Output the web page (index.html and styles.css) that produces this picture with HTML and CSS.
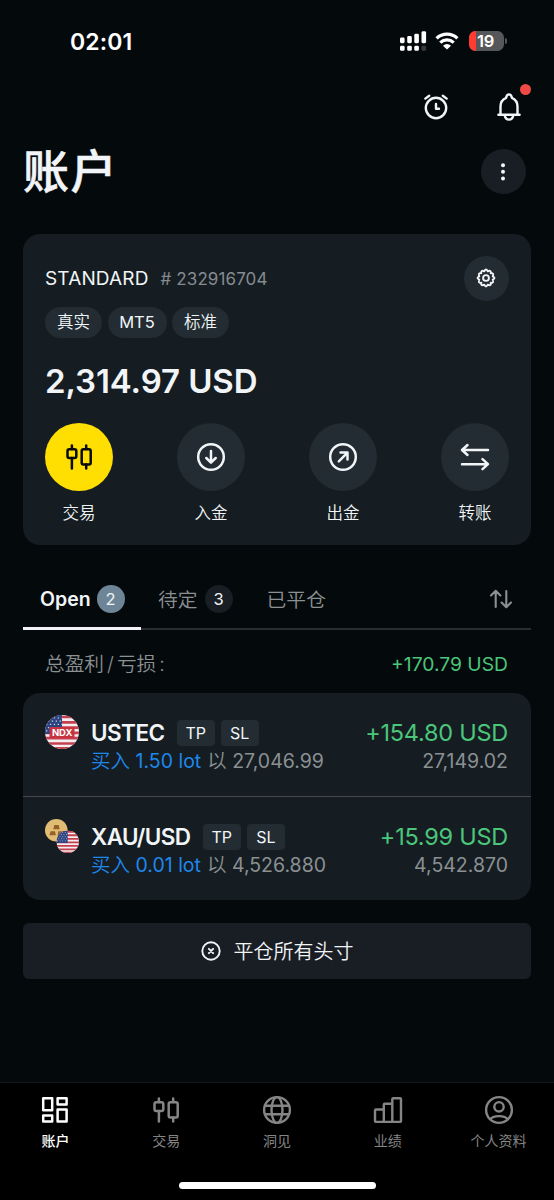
FILE: index.html
```html
<!DOCTYPE html>
<html lang="zh-CN">
<head>
<meta charset="utf-8">
<title>账户</title>
<link rel="stylesheet" href="styles.css">
</head>
<body>
<svg class="defs" width="0" height="0">
  <symbol id="candles" viewBox="0 0 28 28">
    <g fill="none" stroke="currentColor" stroke-width="2.5" stroke-linecap="round" stroke-linejoin="round">
      <rect x="2.500" y="6.200" width="8.800" height="8.800" rx="1.800"/><path d="M6.900 2.600V6M6.900 15v10.600"/>
      <rect x="16.700" y="6.200" width="9" height="15.400" rx="1.800"/><path d="M21.200 2.600V6M21.200 21.600v4"/>
    </g>
  </symbol>
  <symbol id="usflag" viewBox="0 0 34 34">
    <rect width="34" height="34" fill="#f4eef0"/>
    <path d="M0 2h34M0 7.3h34M0 12.6h34M0 17.9h34M0 23.2h34M0 28.5h34M0 33.4h34" stroke="#c4404f" stroke-width="2.7"/>
    <rect width="17" height="19" fill="#2c4380"/>
    <path d="M1 3h16M-1 6.2h18M1 9.4h16M-1 12.6h18M1 15.8h16" stroke="#c9d3ea" stroke-width="1.2" stroke-dasharray="1.3 2.6"/>
  </symbol>
</svg>
<div class="screen">
  <header class="status">
    <span class="time">02:01</span>
    <div class="status-icons">
      <svg width="29" height="22" viewBox="0 0 29 22" fill="#fff">
        <rect x="0" y="7.6" width="4.6" height="5.6" rx="1.4"/><rect x="7.2" y="6" width="4.6" height="7.2" rx="1.4"/><rect x="14.300" y="3.8" width="4.6" height="9.4" rx="1.4"/><rect x="21.500" y="1.2" width="4.6" height="12" rx="1.4"/>
        <rect x="0" y="15.8" width="4.6" height="5" rx="1.4"/><rect x="7.2" y="15.8" width="4.6" height="5" rx="1.4"/><rect x="14.300" y="15.8" width="4.6" height="5" rx="1.4"/><rect x="21.500" y="15.8" width="4.6" height="5" rx="1.4" fill="#37393b"/>
      </svg>
      <svg width="24" height="20" viewBox="0 0 24 20">
        <g fill="none" stroke="#fff" stroke-width="3.3"><path d="M1.600 7.400a15 15 0 0 1 20.800 0"/><path d="M5.300 11.600a9.800 9.800 0 0 1 13.400 0"/></g>
        <path d="M12 18.600 8 14.700a5.800 5.800 0 0 1 8 0z" fill="#fff"/>
      </svg>
      <div class="battery"><span class="level"></span><span class="percent">19</span></div>
      <span class="battery-tip"></span>
    </div>
  </header>

  <div class="tools">
    <svg class="alarm" width="28" height="28" viewBox="0 0 28 28" fill="none" stroke="#f1f5f7" stroke-width="2.4" stroke-linecap="round" stroke-linejoin="round">
      <circle cx="14" cy="15" r="10.2"/><path d="M14 11v4.800h3M3.300 5.600 7.200 2.700M24.700 5.600 20.800 2.700"/>
    </svg>
    <div class="bell">
      <svg width="28" height="30" viewBox="0 0 28 30" fill="none" stroke="#f1f5f7" stroke-width="2.4" stroke-linecap="round" stroke-linejoin="round">
        <path d="M3.400 22.800h21.200M5.500 22.600V14.400c0-4.300 2.300-7 5.500-8.500C11.600 3.400 12.600 2.400 14 2.400s2.400 1 3 3.500c3.200 1.500 5.500 4.200 5.500 8.500v8.200M9.700 23.200c.5 2.900 2 4.400 4.300 4.400s3.800-1.500 4.300-4.400"/>
      </svg>
      <span class="dot"></span>
    </div>
  </div>

  <div class="title-row">
    <h1>账户</h1>
    <button class="round more"><svg width="20" height="20" viewBox="0 0 20 20" fill="#f4f7f9"><circle cx="10" cy="3.200" r="2"/><circle cx="10" cy="9.800" r="2"/><circle cx="10" cy="16.400" r="2"/></svg></button>
  </div>

  <section class="account">
    <div class="account-head">
      <span class="type">STANDARD</span><span class="number"># 232916704</span>
      <button class="round gear"><svg width="20" height="20" viewBox="0 0 20 20" fill="none" stroke="#f1f5f7" stroke-width="1.900" stroke-linejoin="round">
        <circle cx="10" cy="10" r="2.900"/>
        <path d="M8.300 3.300Q10 -.3 11.700 3.300Q15.400 1.700 14.700 5.300Q18.300 4.600 16.700 8.300Q20.300 10 16.700 11.700Q18.300 15.400 14.700 14.700Q15.400 18.300 11.700 16.700Q10 20.300 8.300 16.700Q4.600 18.300 5.300 14.700Q1.700 15.400 3.300 11.700Q-.3 10 3.300 8.300Q1.700 4.600 5.300 5.300Q4.600 1.700 8.300 3.300Z"/>
      </svg></button>
    </div>
    <div class="chips"><span class="chip zh c1">真实</span><span class="chip c2">MT5</span><span class="chip zh c1">标准</span></div>
    <div class="balance">2,314.97 USD</div>
    <div class="actions">
      <div class="action"><span class="disc yellow"><svg width="28" height="28"><use href="#candles"/></svg></span><span class="zh">交易</span></div>
      <div class="action"><span class="disc"><svg width="30" height="30" viewBox="0 0 30 30" fill="none" stroke="#f1f5f7" stroke-width="2.500" stroke-linecap="round" stroke-linejoin="round"><circle cx="15" cy="15" r="12.800"/><path d="M15 9v11M10.300 16l4.700 4.700 4.700-4.700"/></svg></span><span class="zh">入金</span></div>
      <div class="action"><span class="disc"><svg width="30" height="30" viewBox="0 0 30 30" fill="none" stroke="#f1f5f7" stroke-width="2.500" stroke-linecap="round" stroke-linejoin="round"><circle cx="15" cy="15" r="12.800"/><path d="M10.800 19.300 19.500 10.600M12.500 10.500h7v7"/></svg></span><span class="zh">出金</span></div>
      <div class="action"><span class="disc"><svg width="32" height="30" viewBox="0 0 32 30" fill="none" stroke="#f1f5f7" stroke-width="2.500" stroke-linecap="round" stroke-linejoin="round"><path d="M29 8H3.500M8.500 3 3 8l5.500 5M3 22.200h25.500M23.500 17.200l5.500 5-5.500 5"/></svg></span><span class="zh">转账</span></div>
    </div>
  </section>

  <nav class="tabs">
    <div class="tab active"><span class="tab-name">Open</span><span class="count">2</span></div>
    <div class="tab"><span class="lift">待定</span><span class="count dark">3</span></div>
    <div class="tab"><span class="lift">已平仓</span></div>
    <svg class="sort" width="24" height="20" viewBox="0 0 24 20" fill="none" stroke="#8b9093" stroke-width="2.100" stroke-linecap="round" stroke-linejoin="round"><path d="M6.700 18V2M2 6.500 6.700 1.800l4.700 4.700M17.300 2v16M12.600 13.500l4.700 4.700 4.700-4.700"/></svg>
  </nav>

  <div class="total"><span class="total-name">总盈利<i>/</i>亏损<i>:</i></span><span class="total-sum">+170.79 USD</span></div>

  <section class="positions">
    <article class="position">
      <svg class="flag" width="34" height="34" viewBox="0 0 34 34">
        <clipPath id="c34"><circle cx="17" cy="17" r="17"/></clipPath>
        <g clip-path="url(#c34)"><use href="#usflag" width="34" height="34"/><rect x="4.500" y="12" width="25" height="11" rx="1.500" fill="#c9323f"/></g>
        <text class="ndx" x="17.200" y="21.400" text-anchor="middle">NDX</text>
      </svg>
      <div class="info">
        <div class="line"><b>USTEC</b><span class="tag">TP</span><span class="tag">SL</span><span class="profit">+154.80 USD</span></div>
        <div class="line sub"><span class="buy"><span class="zh">买入</span> 1.50 lot</span><span class="at"><span class="zh">以</span> 27,046.99</span><span class="price">27,149.02</span></div>
      </div>
    </article>
    <article class="position">
      <svg class="flag" width="34" height="34" viewBox="0 0 34 34">
        <clipPath id="c22"><circle cx="22.700" cy="22.700" r="11.300"/></clipPath>
        <circle cx="11.300" cy="11.300" r="11.300" fill="#e0bc74"/>
        <path d="M9.300 6h4.400l1 4.300H8.300zM5.600 12.300H10l.8 4H4.400zM13.200 12.300h4.400l1 4h-6z" fill="#956029"/>
        <g clip-path="url(#c22)"><use href="#usflag" x="11.400" y="11.400" width="22.600" height="22.600"/></g>
      </svg>
      <div class="info">
        <div class="line"><b>XAU/USD</b><span class="tag">TP</span><span class="tag">SL</span><span class="profit">+15.99 USD</span></div>
        <div class="line sub"><span class="buy"><span class="zh">买入</span> 0.01 lot</span><span class="at"><span class="zh">以</span> 4,526.880</span><span class="price">4,542.870</span></div>
      </div>
    </article>
  </section>

  <button class="close-all">
    <svg width="20" height="20" viewBox="0 0 20 20" fill="none" stroke="#f1f5f7" stroke-width="1.900" stroke-linecap="round"><circle cx="10" cy="10" r="8.700"/><path d="m7.900 7.900 4.200 4.200M12.100 7.900l-4.200 4.200" stroke-width="2"/></svg>
    <span class="zh">平仓所有头寸</span>
  </button>

  <footer class="bottom">
    <div class="items">
      <div class="item on"><svg width="30" height="30" viewBox="0 0 30 30" fill="none" stroke="currentColor" stroke-width="2.500" stroke-linejoin="round"><rect x="3.200" y="3.200" width="9" height="12"/><rect x="17.600" y="3.200" width="9" height="6.200"/><rect x="3.200" y="20.400" width="9" height="6.200"/><rect x="17.600" y="14.600" width="9" height="12"/></svg><span>账户</span></div>
      <div class="item"><svg width="28" height="30"><use href="#candles"/></svg><span>交易</span></div>
      <div class="item"><svg width="30" height="30" viewBox="0 0 30 30" fill="none" stroke="currentColor" stroke-width="2.400"><circle cx="15" cy="15" r="12.900"/><ellipse cx="15" cy="15" rx="5.500" ry="12.900"/><path d="M3 10.700h24M3 19.300h24"/></svg><span>洞见</span></div>
      <div class="item"><svg width="30" height="30" viewBox="0 0 30 30" fill="none" stroke="currentColor" stroke-width="2.400" stroke-linejoin="round"><path d="M2 15.500q0-1 1-1h7.800v12.400H3q-1 0-1-1zM10.800 14.500V9.700q0-1 1-1h7.500v18.200M10.800 26.900H27q1 0 1-1V4.200q0-1-1-1h-6.700q-1 0-1 1v4.500"/></svg><span>业绩</span></div>
      <div class="item"><svg width="30" height="30" viewBox="0 0 30 30" fill="none" stroke="currentColor" stroke-width="2.400"><circle cx="15" cy="15" r="12.900"/><circle cx="15" cy="11.800" r="4.700"/><path d="M6.500 24.500c2-4.500 15-4.500 17 0"/></svg><span>个人资料</span></div>
    </div>
    <span class="home"></span>
  </footer>
</div>
</body>
</html>
```
FILE: styles.css
```css
* { box-sizing: border-box; }
body { margin: 0; background: #04090c; color: #f1f5f7; font-family: Inter, "Noto Sans CJK SC", sans-serif; }
.defs { display: block; position: absolute; }
.screen { width: 554px; height: 1200px; display: flex; flex-direction: column; overflow: hidden; }
button { border: 0; padding: 0; color: inherit; font: inherit; }
svg { display: block; flex: none; }
span, b { white-space: nowrap; }
.zh { font-weight: 350; }

.status { height: 82px; padding: 0 46px 0 70px; display: flex; align-items: center; justify-content: space-between; }
.time { font-size: 23px; font-weight: 600; letter-spacing: .1px; color: #fff; padding-top: 1px; }
.status-icons { display: flex; align-items: center; }
.status-icons svg:nth-child(1) { margin-right: 6px; }
.status-icons svg:nth-child(2) { margin-right: 10px; }
.battery { width: 35px; height: 20px; border-radius: 6.5px; background: #555759; overflow: hidden; display: flex; align-items: center; }
.level { width: 7px; height: 20px; background: #ff3b32; flex: none; }
.percent { font-size: 16.500px; font-weight: 600; line-height: 20px; color: #fff; margin-left: 1px; letter-spacing: -.2px; }
.battery-tip { width: 2px; height: 6px; border-radius: 0 2px 2px 0; background: #555759; margin-left: 1px; margin-right: 1px; }

.tools { height: 50px; padding: 0 31px 0 0; display: flex; justify-content: flex-end; align-items: center; gap: 45.500px; }
.bell { position: relative; }
.dot { position: absolute; left: 25px; top: -8px; width: 11px; height: 11px; border-radius: 50%; background: #ef4a43; }

.title-row { height: 102px; padding: 17px 28.500px 0 23px; display: flex; justify-content: space-between; align-items: flex-start; }
h1 { margin: 0; font-size: 46px; line-height: 45px; font-weight: 500; letter-spacing: 1.500px; -webkit-text-stroke: .6px #f1f5f7; }
.round { width: 45px; height: 45px; border-radius: 50%; display: flex; align-items: center; justify-content: center; flex: none; }
.more { background: #191d24; }

.account { margin: 0 23px; height: 311px; padding: 22px; border-radius: 17px; background: #151d22; }
.account-head { height: 45px; display: flex; align-items: center; }
.type { font-size: 19px; letter-spacing: .15px; }
.number { font-size: 17px; color: #858b90; margin-left: 12px; letter-spacing: .1px; }
.gear { margin-left: auto; background: #232c32; }
.gear svg { margin-right: 1px; margin-bottom: 1px; }
.chips { display: flex; gap: 5.500px; margin-top: 6px; }
.chip { height: 31px; line-height: 31px; border-radius: 16px; background: #232c32; font-size: 16.500px; text-align: center; }
.c1 { width: 57px; }
.c2 { width: 59px; }
.balance { height: 85px; line-height: 86px; font-size: 33px; font-weight: 600; letter-spacing: -.1px; }
.actions { display: flex; justify-content: space-between; }
.action { width: 68px; display: flex; flex-direction: column; align-items: center; font-size: 16.500px; line-height: 20px; gap: 12px; }
.disc { width: 68px; height: 68px; border-radius: 50%; background: #232c32; display: flex; align-items: center; justify-content: center; }
.yellow { background: #ffde02; color: #080a0b; }

.tabs { margin: 24px 23px 0; height: 61px; display: flex; border-bottom: 2px solid #292d30; }
.tab { height: 60px; padding: 0 17px; display: flex; align-items: center; gap: 7px; font-size: 19.800px; font-weight: 350; color: #8b9093; }
.active { height: 61px; width: 118px; padding-right: 0; gap: 6px; color: #f1f5f7; border-bottom: 3px solid #f1f1f7; padding-top: 2px; }
.tab-name { font-size: 19.500px; font-weight: 600; padding-bottom: 1px; }
.lift { padding-bottom: 2px; }
.count { width: 28px; height: 28px; line-height: 28px; border-radius: 50%; background: #6d8596; color: #f1f5f7; text-align: center; font-size: 16.500px; font-weight: 400; }
.dark { background: #191d24; }
.sort { margin: 20px 18px 0 auto; }

.total { height: 63px; padding: 6px 46px 0 45px; display: flex; justify-content: space-between; align-items: center; }
.total-name { font-size: 19.700px; font-weight: 350; color: #8b9093; padding-bottom: 4px; }
.total-name i { font-style: normal; margin: 0 3px; }
.total-sum { font-size: 19.300px; color: #4bc67b; padding-bottom: 1px; }

.positions { margin: 0 23px; height: 207px; border-radius: 17px; background: #151d22; }
.position { height: 103px; padding: 22px 23px 0 22px; display: flex; }
.position + .position { height: 104px; border-top: 1px solid #42484d; }
.info { flex: 1; margin-left: 12px; margin-top: 3px; }
.line { display: flex; align-items: center; height: 29px; line-height: 29px; }
.line b { font-size: 22.500px; font-weight: 600; letter-spacing: -.550px; margin-right: 12px; }
.tag { width: 38.500px; height: 26px; line-height: 26px; border-radius: 4px; background: #232c32; text-align: center; font-size: 16px; margin-right: 5.500px; }
.profit, .price { margin-left: auto; }
.profit { font-size: 23.500px; letter-spacing: -.250px; color: #4bc67b; }
.sub { height: 29px; line-height: 29px; font-size: 19.500px; color: #8b9093; }
.buy { color: #1e87ec; margin-right: 6px; }
.ndx { font-size: 9.500px; font-weight: 700; fill: #fff; }

.close-all { margin: 23px 23px 0; height: 56px; padding-bottom: 1px; border-radius: 6px; background: #191d24; display: flex; align-items: center; justify-content: center; gap: 13px; font-size: 20px; }
.close-all span { padding-bottom: 1px; }

.bottom { margin-top: auto; height: 118px; border-top: 1px solid #14181a; background: #000; display: flex; flex-direction: column; align-items: center; }
.items { width: 100%; display: flex; padding-top: 12px; }
.item { flex: 1; display: flex; flex-direction: column; align-items: center; gap: 6px; font-size: 14px; line-height: 20px; color: #858585; }
.on { color: #fff; }
.on span { font-weight: 500; }
.home { width: 197px; height: 7px; border-radius: 4px; background: #fff; margin-top: 31px; }
```
